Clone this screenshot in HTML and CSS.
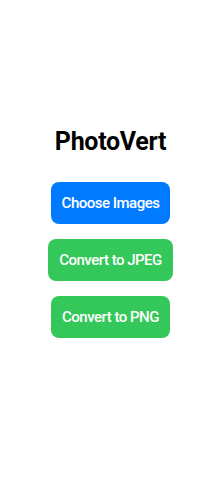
FILE: index.html
```html
<!DOCTYPE html>
<html lang="en">

<head>
    <meta charset="UTF-8">
    <meta name="viewport" content="width=device-width, initial-scale=1.0">
    <title>PhotoVert</title>
    <link rel="stylesheet" href="styles.css">
</head>

<body>
    <div class="app">
        <h1 class="app-title">PhotoVert</h1>
        <button class="btn btn-blue">Choose Images</button>
        <button class="btn btn-green">Convert to JPEG</button>
        <button class="btn btn-green">Convert to PNG</button>
    </div>
</body>

</html>
```
FILE: styles.css
```css
body {
    font-family: Roboto, "Noto Sans", sans-serif;
    background-color: #fff;
    color: #000;
    margin: 0;
}

.app {
    display: flex;
    flex-direction: column;
    align-items: center;
    gap: 15px;
    padding-top: 127px;
}

.app-title {
    font-size: 25px;
    font-weight: 700;
    letter-spacing: -0.3px;
    margin: 0 0 11px;
}

.btn {
    font-family: inherit;
    font-size: 15px;
    font-weight: 500;
    letter-spacing: -0.5px;
    color: #fff;
    border: none;
    border-radius: 8px;
    height: 42px;
    padding: 0 11px;
    cursor: pointer;
}

.btn-blue {
    background-color: #007aff;
}

.btn-green {
    background-color: #34c759;
}
```
